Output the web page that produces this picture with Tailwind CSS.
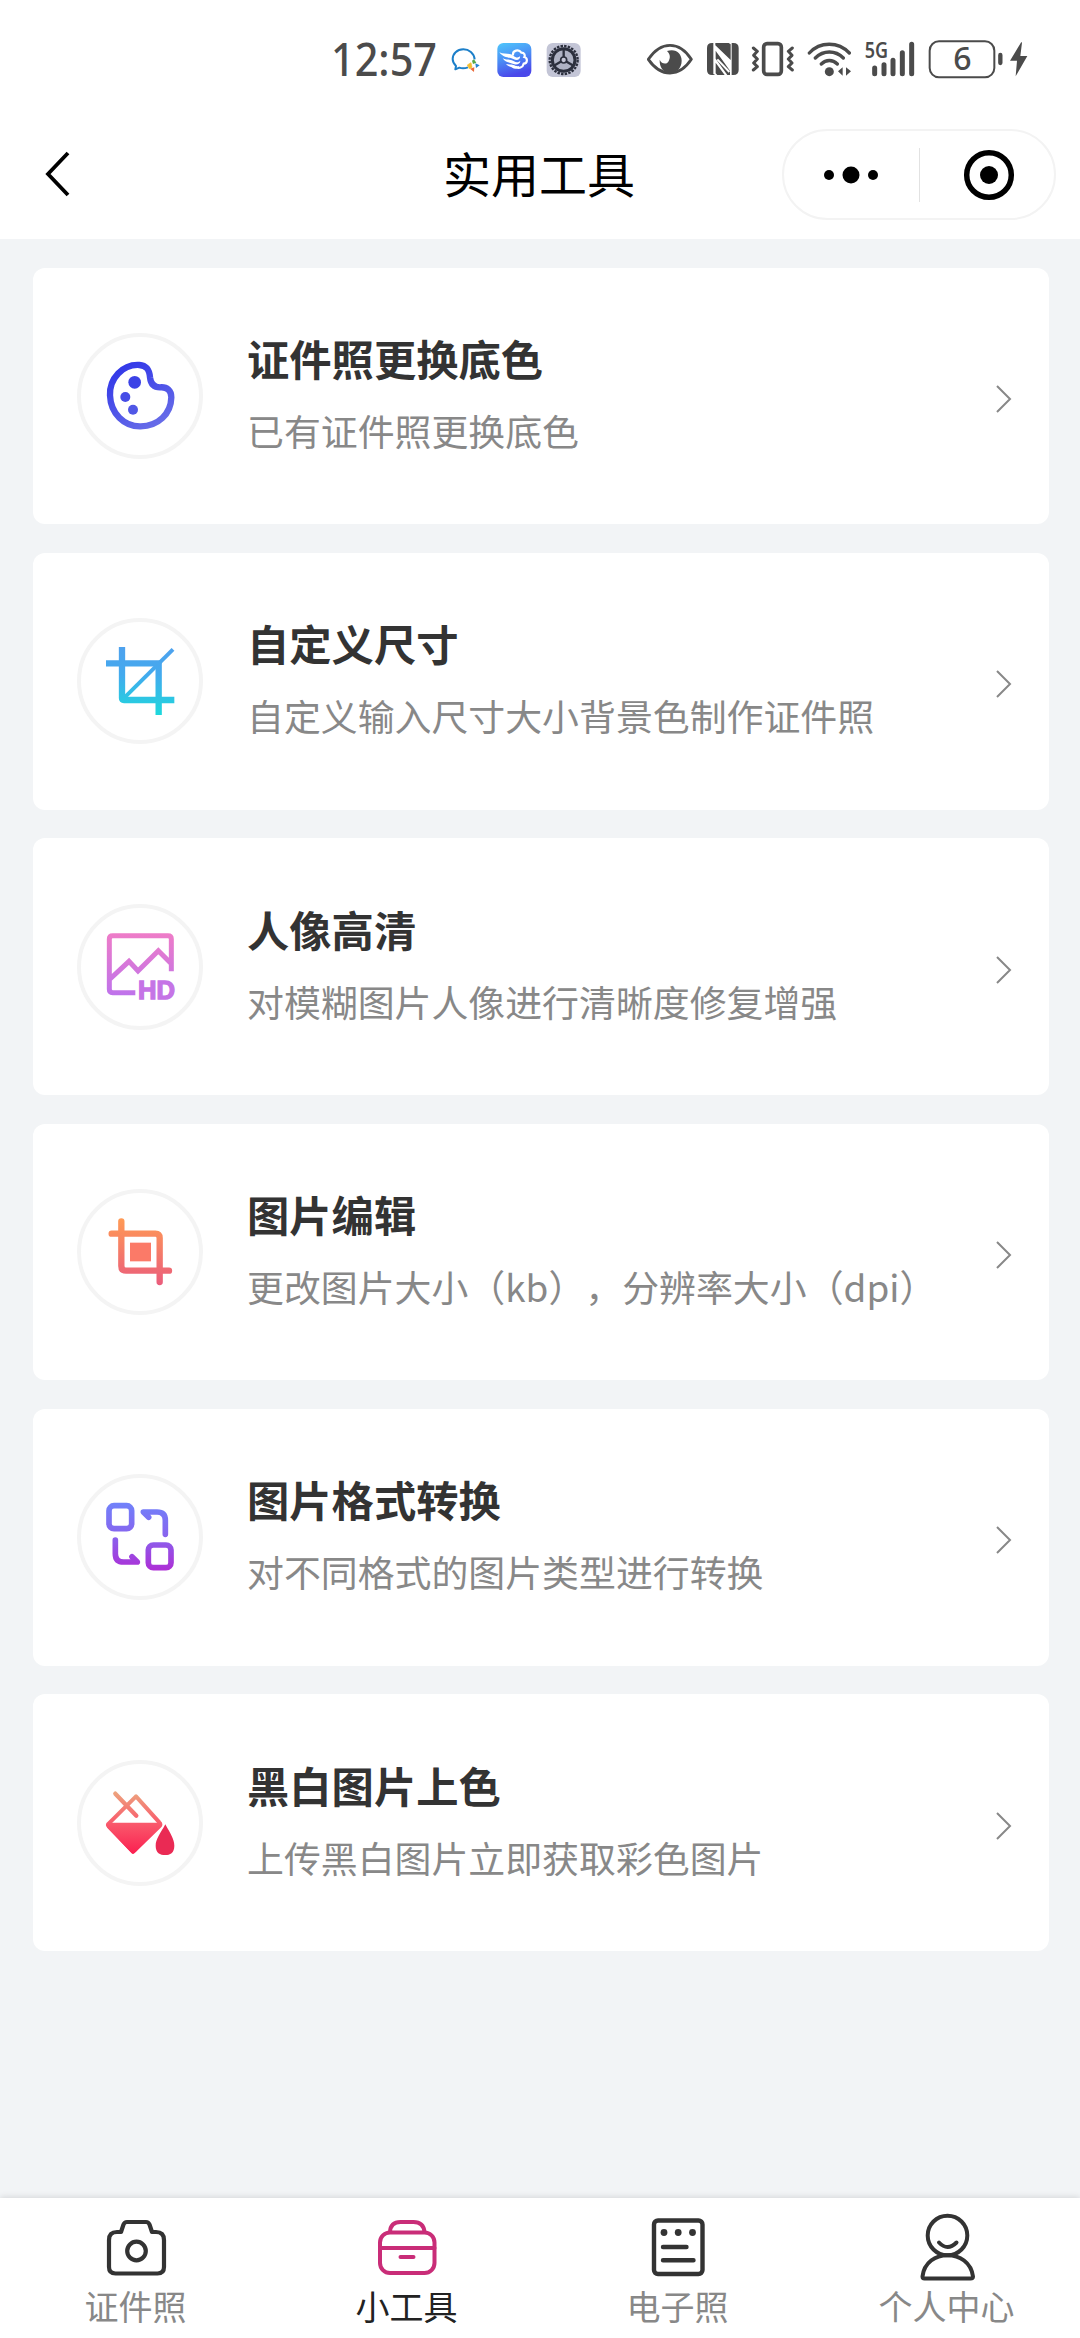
<!DOCTYPE html>
<html lang="zh-CN">
<head>
<meta charset="utf-8">
<title>实用工具</title>
<script src="https://cdn.jsdelivr.net/npm/@tailwindcss/browser@4"></script>
</head>
<body class="w-[1080px] h-[2338px] overflow-hidden flex flex-col bg-[#f2f4f6] font-['Noto_Sans_CJK_SC',sans-serif]">
<!-- status bar -->
<div class="h-[110px] shrink-0 bg-white pt-[40px] flex items-start text-[#4b4b4b]">
  <svg class="ml-[330px] -mt-[20px] w-[108px] h-[80px] overflow-visible" viewBox="0 -20 108 80"><text x="1" y="36.300" font-size="44.500" font-weight="500" textLength="106" lengthAdjust="spacingAndGlyphs" font-family="Noto Sans" fill="currentColor">12:57</text></svg>
  <svg class="ml-[13px] w-[30px] h-[40px]" viewBox="423 60 90 120" fill="none" stroke-width="6" stroke-linejoin="round">
    <path d="M494 118C492 99 477 88 460 88C441 88 428 101 428 117C428 126 432 132 438 138L436 148L448 143C456 146 466 145 474 142" stroke="#1c7fc9"/>
    <path d="M472 135L483 128L486 142L478 146Z" fill="#f5bd2e" stroke="#f5bd2e" stroke-width="2"/>
    <path d="M486 122L492 118L499 128L489 132Z" fill="#58a848"/><path d="M496 130L509 136L498 144Z" fill="#2383d4"/><path d="M480 146L493 142L492 156Z" fill="#eb6a3a"/>
  </svg>
  <svg class="ml-[15px] w-[36px] h-[40px]" viewBox="560 60 108 120">
    <defs><linearGradient id="cl" x1="0" y1="0" x2=".3" y2="1"><stop stop-color="#4fc7fb"/><stop offset=".5" stop-color="#4b8ff5"/><stop offset="1" stop-color="#4a48ea"/></linearGradient></defs>
    <rect x="564" y="69" width="102" height="102" rx="18" fill="url(#cl)"/>
    <path d="M611 104C610 92 628 86 636 98C646 98 648 106 645 111C656 114 655 130 643 131C640 144 628 146 620 141" fill="none" stroke="#fff" stroke-width="6.500" stroke-linecap="round"/>
    <path d="M570 97C584 105 600 97 612 107C620 114 628 114 632 108C634 118 624 124 612 117C600 112 582 114 570 97ZM580 115C592 122 602 116 614 124C622 129 630 126 633 122C633 133 620 136 610 131C600 127 588 128 580 115ZM590 132C600 135 608 131 615 136C620 140 626 140 630 137C628 147 616 148 609 143C602 139 596 140 590 132Z" fill="#fff"/>
  </svg>
  <svg class="ml-[14px] w-[36px] h-[40px]" viewBox="710 60 108 120">
    <rect x="712" y="69" width="102" height="102" rx="18" fill="#c3c5d6"/>
    <circle cx="763" cy="120" r="42" fill="none" stroke="#2b2f3d" stroke-width="7" stroke-dasharray="7.500 3.500"/>
    <circle cx="763" cy="120" r="34" fill="#aeb2c4" stroke="#2b2f3d" stroke-width="9"/>
    <path d="M763 120V88M763 120L736 136M763 120L790 136" stroke="#2b2f3d" stroke-width="7"/><circle cx="763" cy="120" r="9" fill="#c3c5d6" stroke="#2b2f3d" stroke-width="5"/>
  </svg>
  <svg class="ml-[65px] w-[46px] h-[40px]" viewBox="50 60 138 120">
    <path d="M54 118C74 88 96 76 119 76C142 76 164 88 183 118C164 147 142 159 119 159C96 159 74 147 54 118Z" fill="none" stroke="currentColor" stroke-width="8.500" stroke-linejoin="round"/>
    <path d="M110 93C136 84 154 100 154 122C154 144 138 159 119 159C99 159 87 141 88 119C94 132 108 134 114 125C121 114 120 102 110 93Z" fill="currentColor"/>
  </svg>
  <svg class="ml-[13px] w-[34px] h-[40px]" viewBox="228 60 102 120" fill="currentColor">
    <path d="M246 69H250V162L256 165H246Q231 165 231 150V84Q231 69 246 69ZM256 69H296L302 73V120L256 76ZM310 69Q326 69 326 84V150Q326 165 310 165H305V69ZM257 92L300 152V165H292L257 116ZM257 128L284 165H262L257 160Z"/>
    <path d="M262 94L300 134M262 118L298 156" stroke="#fff" stroke-width="6"/>
  </svg>
  <svg class="ml-[11px] w-[43px] h-[40px]" viewBox="364 60 129 120" fill="none" stroke="currentColor" stroke-width="9">
    <rect x="402" y="71" width="53" height="92" rx="10" stroke-width="11"/>
    <path d="M371 84L383 94L372 106L383 117L372 129L383 140L371 150M488 84L476 94L487 106L476 117L487 129L476 140L488 150" stroke-width="9" stroke-linejoin="round" stroke-linecap="round"/>
  </svg>
  <svg class="ml-[13px] w-[45px] h-[40px]" viewBox="531 60 135 120" fill="none" stroke="currentColor" stroke-width="10" stroke-linecap="round">
    <path d="M538 99C570 64 625 64 658 99M556 114C580 90 616 90 640 114M574 132C588 118 608 118 622 132"/>
    <circle cx="598" cy="155" r="13.500" fill="currentColor" stroke="none"/><path d="M624 154L638 142V167ZM663 154L648 142V167Z" fill="currentColor" stroke="none"/>
  </svg>
  <svg class="ml-[12px] -mt-[20px] w-[52px] h-[80px] overflow-visible" viewBox="703 0 156 240" fill="none" stroke="currentColor" stroke-width="15" stroke-linecap="round">
    <text x="705" y="113" font-size="66" font-weight="600" textLength="70" lengthAdjust="spacingAndGlyphs" font-family="Noto Sans" fill="currentColor" stroke="none">5G</text>
    <path d="M735 144V161M763 134V161M790 121V161M818 98V161M846 73V161"/>
  </svg>
  <svg class="ml-[12px] -mt-[20px] w-[78px] h-[80px] overflow-visible" viewBox="894 0 234 240" fill="none" stroke="currentColor">
    <rect x="899" y="64" width="194" height="108" rx="28" stroke-width="6"/><path d="M1111 105V129" stroke-width="13" stroke-linecap="round"/>
    <text x="997" y="151" text-anchor="middle" font-size="96" font-weight="500" font-family="Noto Sans" fill="currentColor" stroke="none">6</text>
  </svg>
  <svg class="ml-[3px] w-[20px] h-[40px]" viewBox="1136 60 60 120" fill="currentColor"><path d="M1173 66L1139 122H1160L1156 169L1191 108H1170L1175 68Z"/></svg>
</div>
<!-- navigation bar -->
<div class="h-[129px] shrink-0 bg-white grid grid-cols-[1fr_auto_1fr] text-black">
  <svg class="ml-[43px] mt-[40px] w-[30px] h-[48px]" viewBox="0 0 30 48" fill="none" stroke="currentColor" stroke-width="3.800"><path d="M25 3L5 24L25 45"/></svg>
  <h1 class="mt-[27px] -ml-[2px] text-[48px] leading-[70px]">实用工具</h1>
  <div class="justify-self-end mr-[24px] mt-[19px] w-[274px] h-[91px] rounded-full border-2 border-[#f3f3f3] flex items-center">
    <svg class="ml-[38px] w-[60px] h-[20px]" viewBox="0 0 60 20"><circle cx="7" cy="10" r="5"/><circle cx="29" cy="10" r="8.500"/><circle cx="51" cy="10" r="5"/></svg>
    <div class="ml-[37px] w-[1px] h-[54px] bg-[#e2e2e2]"></div>
    <svg class="ml-[43px] w-[52px] h-[52px]" viewBox="0 0 52 52"><circle cx="26" cy="26" r="22.300" fill="none" stroke="currentColor" stroke-width="5.500"/><circle cx="26" cy="26" r="9"/></svg>
  </div>
</div>
<!-- tool list -->
<main class="grow pt-[28.700px] pl-[33px] pr-[31px] flex flex-col gap-[28.500px]">
  <a class="h-[256.800px] shrink-0 rounded-xl bg-white flex items-center pl-[44px] pr-[36px]">
    <div class="w-[126px] h-[126px] rounded-full border-4 border-[#f4f4f4] flex items-center justify-center"><svg class="w-[118px] h-[118px] shrink-0" viewBox="33 51 354 354">
      <defs><linearGradient id="g1" gradientUnits="userSpaceOnUse" x1="150" y1="130" x2="260" y2="330"><stop stop-color="#3036e8"/><stop offset="1" stop-color="#6a6fe8"/></linearGradient></defs>
      <path d="M208 135C158 132 118 176 120 226C122 280 162 320 212 319C264 318 303 282 304 232C304 212 292 200 270 202C250 202 242 190 240 172C238 148 230 137 208 135Z" fill="none" stroke="url(#g1)" stroke-width="19"/><circle cx="194" cy="187" r="19" fill="#3b42e6"/><circle cx="166" cy="231" r="15" fill="#464de6"/><circle cx="189" cy="269" r="15" fill="#5057e6"/></svg></div>
    <div class="ml-[44px] -mt-[8px] grow"><h2 class="text-[42.300px] leading-[62px] font-bold text-[#333]">证件照更换底色</h2><p class="mt-[14px] text-[36.900px] leading-[54px] text-[#888]">已有证件照更换底色</p></div>
    <svg class="mt-[6px] w-[18px] h-[30px]" viewBox="0 0 18 30" fill="none" stroke="#888" stroke-width="2"><path d="M2 2L15 15L2 28"/></svg>
  </a>
  <a class="h-[256.800px] shrink-0 rounded-xl bg-white flex items-center pl-[44px] pr-[36px]">
    <div class="w-[126px] h-[126px] rounded-full border-4 border-[#f4f4f4] flex items-center justify-center"><svg class="w-[118px] h-[118px] shrink-0" viewBox="33 52 354 354">
      <defs><linearGradient id="g2" gradientUnits="userSpaceOnUse" x1="0" y1="130" x2="0" y2="330"><stop stop-color="#4ea2ee"/><stop offset=".4" stop-color="#43aaee"/><stop offset="1" stop-color="#1ed8dc"/></linearGradient></defs>
      <path d="M156 127V280Q156 286 162 286H313M108 176H266V331" fill="none" stroke="url(#g2)" stroke-width="19"/><path d="M158 284L309 134" fill="none" stroke="url(#g2)" stroke-width="12"/></svg></div>
    <div class="ml-[44px] -mt-[8px] grow"><h2 class="text-[42.300px] leading-[62px] font-bold text-[#333]">自定义尺寸</h2><p class="mt-[14px] text-[36.900px] leading-[54px] text-[#888]">自定义输入尺寸大小背景色制作证件照</p></div>
    <svg class="mt-[6px] w-[18px] h-[30px]" viewBox="0 0 18 30" fill="none" stroke="#888" stroke-width="2"><path d="M2 2L15 15L2 28"/></svg>
  </a>
  <a class="h-[256.800px] shrink-0 rounded-xl bg-white flex items-center pl-[44px] pr-[36px]">
    <div class="w-[126px] h-[126px] rounded-full border-4 border-[#f4f4f4] flex items-center justify-center"><svg class="w-[118px] h-[118px] shrink-0" viewBox="33 53 354 354">
      <defs><linearGradient id="g3" gradientUnits="userSpaceOnUse" x1="0" y1="130" x2="0" y2="330"><stop stop-color="#ee7cc8"/><stop offset="1" stop-color="#bb72ee"/></linearGradient></defs>
      <path d="M196 307H128Q118 307 118 297V146Q118 136 128 136H294Q304 136 304 146V243M120 266L177 213L204 242L265 181L304 220" fill="none" stroke="url(#g3)" stroke-width="15"/>
      <text x="204" y="327" font-size="77" font-weight="700" textLength="111" lengthAdjust="spacingAndGlyphs" font-family="Liberation Sans" fill="#c574e6" stroke="#c574e6" stroke-width="4">HD</text></svg></div>
    <div class="ml-[44px] -mt-[8px] grow"><h2 class="text-[42.300px] leading-[62px] font-bold text-[#333]">人像高清</h2><p class="mt-[14px] text-[36.900px] leading-[54px] text-[#888]">对模糊图片人像进行清晰度修复增强</p></div>
    <svg class="mt-[6px] w-[18px] h-[30px]" viewBox="0 0 18 30" fill="none" stroke="#888" stroke-width="2"><path d="M2 2L15 15L2 28"/></svg>
  </a>
  <a class="h-[256.800px] shrink-0 rounded-xl bg-white flex items-center pl-[44px] pr-[36px]">
    <div class="w-[126px] h-[126px] rounded-full border-4 border-[#f4f4f4] flex items-center justify-center"><svg class="w-[118px] h-[118px] shrink-0" viewBox="33 53 354 354">
      <defs><linearGradient id="g4" gradientUnits="userSpaceOnUse" x1="0" y1="130" x2="0" y2="330"><stop stop-color="#ff9a55"/><stop offset="1" stop-color="#ea5c7c"/></linearGradient></defs>
      <path d="M154 138V272Q154 286 168 286H297M125 175H256Q269 175 269 188V320" fill="none" stroke="url(#g4)" stroke-width="19" stroke-linecap="round"/><rect x="180" y="202" width="63" height="56" fill="#fb7a68"/></svg></div>
    <div class="ml-[44px] -mt-[8px] grow"><h2 class="text-[42.300px] leading-[62px] font-bold text-[#333]">图片编辑</h2><p class="mt-[14px] text-[36.900px] leading-[54px] text-[#888] whitespace-nowrap [text-spacing-trim:space-all]">更改图片大小（kb），分辨率大小（dpi）</p></div>
    <svg class="mt-[6px] w-[18px] h-[30px] shrink-0" viewBox="0 0 18 30" fill="none" stroke="#888" stroke-width="2"><path d="M2 2L15 15L2 28"/></svg>
  </a>
  <a class="h-[256.800px] shrink-0 rounded-xl bg-white flex items-center pl-[44px] pr-[36px]">
    <div class="w-[126px] h-[126px] rounded-full border-4 border-[#f4f4f4] flex items-center justify-center"><svg class="w-[118px] h-[118px] shrink-0" viewBox="33 55 354 354">
      <defs><linearGradient id="g5" gradientUnits="userSpaceOnUse" x1="0" y1="130" x2="0" y2="330"><stop stop-color="#7182fa"/><stop offset=".5" stop-color="#8863ee"/><stop offset="1" stop-color="#ad2fd6"/></linearGradient></defs>
      <g fill="none" stroke="url(#g5)" stroke-width="17" stroke-linecap="round" stroke-linejoin="round"><rect x="117" y="138" width="68" height="69" rx="15"/><rect x="235" y="256" width="68" height="68" rx="15"/><path d="M286 224V182Q286 157 261 157H220L236 173M136 241V282Q136 307 161 307H202L186 291"/></g>
      </svg></div>
    <div class="ml-[44px] -mt-[8px] grow"><h2 class="text-[42.300px] leading-[62px] font-bold text-[#333]">图片格式转换</h2><p class="mt-[14px] text-[36.900px] leading-[54px] text-[#888]">对不同格式的图片类型进行转换</p></div>
    <svg class="mt-[6px] w-[18px] h-[30px]" viewBox="0 0 18 30" fill="none" stroke="#888" stroke-width="2"><path d="M2 2L15 15L2 28"/></svg>
  </a>
  <a class="h-[256.800px] shrink-0 rounded-xl bg-white flex items-center pl-[44px] pr-[36px]">
    <div class="w-[126px] h-[126px] rounded-full border-4 border-[#f4f4f4] flex items-center justify-center"><svg class="w-[118px] h-[118px] shrink-0" viewBox="33 55 354 354">
      <defs><linearGradient id="g6" gradientUnits="userSpaceOnUse" x1="0" y1="140" x2="0" y2="325"><stop stop-color="#eda37e"/><stop offset=".5" stop-color="#f95a6c"/><stop offset="1" stop-color="#fb1f50"/></linearGradient></defs>
      <path d="M198 152L116 234Q112 238 116 242L186 314Q190 318 194 314L268 242Q274 236 268 230Z" fill="none" stroke="url(#g6)" stroke-width="12" stroke-linejoin="round"/><path d="M110 231H276L194 322Q189 328 184 322L112 246Z" fill="url(#g6)"/>
      <path d="M136 144L199 210" stroke="url(#g6)" stroke-width="13" stroke-linecap="round"/><path d="M286 236C300 262 313 280 313 300C313 322 300 328 286 328C270 328 257 322 257 300C257 280 272 262 286 236Z" fill="#ea2a54"/></svg></div>
    <div class="ml-[44px] -mt-[8px] grow"><h2 class="text-[42.300px] leading-[62px] font-bold text-[#333]">黑白图片上色</h2><p class="mt-[14px] text-[36.900px] leading-[54px] text-[#888]">上传黑白图片立即获取彩色图片</p></div>
    <svg class="mt-[6px] w-[18px] h-[30px]" viewBox="0 0 18 30" fill="none" stroke="#888" stroke-width="2"><path d="M2 2L15 15L2 28"/></svg>
  </a>
</main>
<!-- tab bar -->
<nav class="h-[140px] shrink-0 bg-white shadow-[0_-1px_6px_rgba(0,0,0,0.12)] grid grid-cols-[271px_271px_271px_267px] text-[34px] leading-[50px] text-[#888]">
  <a class="flex flex-col items-center pt-[12px]"><svg class="w-[70px] h-[72px]" viewBox="100 2210 70 72" fill="none" stroke="#333" stroke-width="4.200" stroke-linejoin="round"><path d="M120 2232L122.500 2224.500Q123.500 2222 126 2222H145Q147.500 2222 148.500 2224.500L151 2232H155Q163 2232 163 2240V2267Q163 2273.500 156.500 2273.500H114.500Q108 2273.500 108 2267V2240Q108 2232 116 2232Z"/><circle cx="135.500" cy="2251" r="9.300"/></svg><span class="-mt-[1px]">证件照</span></a>
  <a class="flex flex-col items-center pt-[12px] text-[#222]"><svg class="w-[70px] h-[72px]" viewBox="371.500 2210 70 72" fill="none" stroke="#c92d78" stroke-width="4" stroke-linecap="round"><rect x="379.500" y="2232.500" width="54.500" height="40.500" rx="10"/><path d="M389.500 2232Q390 2222 400 2222H413Q423 2222 424 2232M380 2248H434M400 2257H413"/></svg><span class="-mt-[1px]">小工具</span></a>
  <a class="flex flex-col items-center pt-[12px]"><svg class="w-[70px] h-[72px]" viewBox="641.500 2210 70 72" fill="none" stroke="#333" stroke-width="4.400" stroke-linecap="round"><rect x="652.500" y="2220.500" width="48.500" height="53.500" rx="4"/><path d="M661.500 2247H685M661.500 2260.300H692"/><g fill="#333" stroke="none"><circle cx="662.500" cy="2232.500" r="3.400"/><circle cx="676.700" cy="2232.500" r="3.400"/><circle cx="691" cy="2232.500" r="3.400"/></g></svg><span class="-mt-[1px]">电子照</span></a>
  <a class="flex flex-col items-center pt-[12px]"><svg class="w-[70px] h-[72px]" viewBox="911.500 2210 70 72" fill="none" stroke="#333" stroke-width="4" stroke-linecap="round" stroke-linejoin="round"><circle cx="947" cy="2235.500" r="19.800"/><path d="M938.500 2242.500Q947 2251.500 956 2242.500M922 2276.500C925 2248 969 2248 972.500 2276.500Q972.500 2278.500 970 2278.500H924Q922 2278.500 922 2276.500Z"/></svg><span class="-mt-[1px]">个人中心</span></a>
</nav>
</body>
</html>
